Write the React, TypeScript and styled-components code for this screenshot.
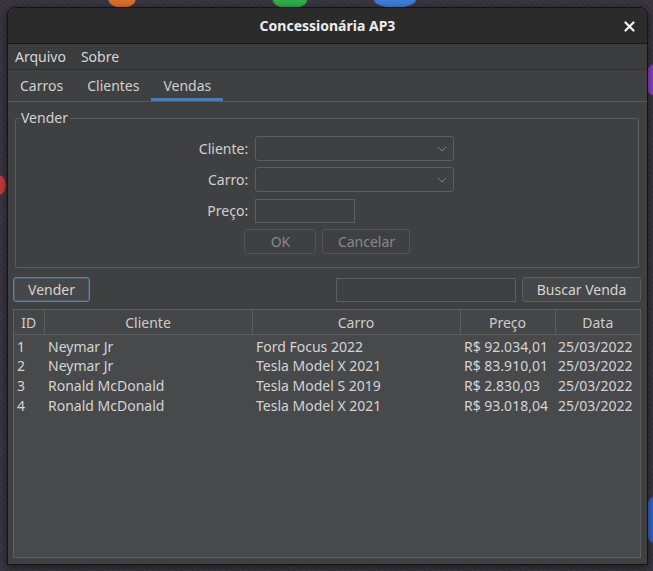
import React from 'react'
import styled, { createGlobalStyle } from 'styled-components'

const GlobalStyle = createGlobalStyle`
  html, body {
    margin: 0;
    padding: 0;
    background: #36323d;
  }
  * {
    box-sizing: border-box;
  }
`

const Desktop = styled.div`
  width: 653px;
  height: 571px;
  overflow: hidden;
  padding: 7px 0 0 7px;
  font-family: "Noto Sans", "DejaVu Sans", sans-serif;
  font-size: 14px;
  color: #d2d2d2;
  background:
    radial-gradient(ellipse 14px 8px at 122px 0px, #d9702c 0 90%, transparent 100%),
    radial-gradient(ellipse 18px 9px at 290px 0px, #2fae4c 0 90%, transparent 100%),
    radial-gradient(ellipse 22px 8px at 395px 0px, #3d7fd6 0 90%, transparent 100%),
    radial-gradient(ellipse 8px 16px at 653px 80px, #8a3fc4 0 90%, transparent 100%),
    radial-gradient(ellipse 8px 24px at 653px 520px, #2f66c9 0 90%, transparent 100%),
    radial-gradient(ellipse 6px 10px at 0px 185px, #c23a3a 0 90%, transparent 100%),
    repeating-linear-gradient(45deg, #37333e 0 2px, #3c3844 2px 4px);
`

const Window = styled.div`
  width: 641px;
  height: 558px;
  display: flex;
  flex-direction: column;
  background: #3f4042;
  border: 1px solid #141414;
  border-radius: 8px 8px 0 0;
  box-shadow: 0 2px 8px rgba(0, 0, 0, 0.55);
  overflow: hidden;
`

const TitleBar = styled.div`
  position: relative;
  height: 36px;
  flex-shrink: 0;
  display: flex;
  align-items: center;
  justify-content: center;
  background: #2b2b2b;
  border-bottom: 1px solid #181818;
  font-weight: 700;
  color: #ececec;
`

const CloseButton = styled.button`
  position: absolute;
  right: 11px;
  top: 11px;
  width: 14px;
  height: 14px;
  padding: 0;
  border: 0;
  background: none;
  display: flex;
  align-items: center;
  justify-content: center;
`

const MenuBar = styled.div`
  height: 26px;
  flex-shrink: 0;
  display: flex;
  align-items: center;
  gap: 15px;
  padding: 0 7px;
  background: #3b3c3d;
  border-bottom: 1px solid #303132;
`

const MenuItem = styled.span`
  color: #d6d6d6;
`

const TabBar = styled.div`
  height: 32px;
  flex-shrink: 0;
  display: flex;
  border-bottom: 1px solid #58595b;
`

const Tab = styled.div<{ $active?: boolean }>`
  display: flex;
  align-items: center;
  padding: 3px 12px 0;
  border-bottom: 3px solid ${p => (p.$active ? '#4a7db3' : 'transparent')};
  color: #d0d0d0;
`

const Content = styled.div`
  flex: 1;
  display: flex;
  flex-direction: column;
  padding: 6px 6px 6px 5px;
  min-height: 0;
`

const GroupBox = styled.fieldset`
  margin: 0 2px;
  padding: 8px 0 13px;
  border: 1px solid #5b5c5e;
  border-radius: 2px;
  min-width: 0;
`

const GroupTitle = styled.legend`
  margin-left: 3px;
  padding: 0 2px;
  line-height: 20px;
  color: #d2d2d2;
`

const FormGrid = styled.div`
  display: grid;
  grid-template-columns: auto 199px;
  grid-auto-rows: 25px;
  column-gap: 7px;
  row-gap: 6px;
  justify-content: center;
  align-items: center;
  padding-right: 1px;
`

const Label = styled.label`
  text-align: right;
  color: #d0d0d0;
`

const Combo = styled.div`
  height: 25px;
  width: 199px;
  display: flex;
  align-items: center;
  justify-content: flex-end;
  padding-right: 6px;
  border: 1px solid #5d5e60;
  border-radius: 3px;
  background: #3f4042;
`

const TextInput = styled.div<{ $width: number }>`
  height: 24px;
  width: ${p => p.$width}px;
  border: 1px solid #5d5e60;
  background: #3f4042;
`

const ButtonRow = styled.div`
  grid-column: 1 / -1;
  display: flex;
  justify-content: center;
  gap: 6px;
  padding-left: 2px;
`

const Button = styled.button<{ $width: number; $disabled?: boolean; $focused?: boolean }>`
  width: ${p => p.$width}px;
  height: 25px;
  padding: 0;
  font: inherit;
  color: ${p => (p.$disabled ? '#87888a' : '#d4d4d4')};
  background: ${p => (p.$disabled ? '#3f4042' : '#464749')};
  border: 1px solid ${p => (p.$focused ? '#5585b8' : p.$disabled ? '#535456' : '#5d5e60')};
  box-shadow: ${p => (p.$focused ? 'inset 0 0 0 1px rgba(85, 133, 184, 0.35)' : 'none')};
  border-radius: 3px;
`

const Toolbar = styled.div`
  margin-top: 9px;
  height: 25px;
  flex-shrink: 0;
  display: flex;
  align-items: center;
  gap: 6px;
`

const Spacer = styled.div`
  flex: 1;
`

const TableFrame = styled.div`
  margin-top: 7px;
  flex: 1;
  border: 1px solid #5e5f61;
  background: #48494b;
  overflow: hidden;
`

const Table = styled.table`
  width: 100%;
  border-collapse: collapse;
  table-layout: fixed;
`

const HeadCell = styled.th`
  height: 24px;
  padding: 1px 0 0;
  font-weight: 400;
  text-align: center;
  color: #cdcdcd;
  background: #454648;
  border-right: 1px solid #5b5c5e;
  border-bottom: 1px solid #5b5c5e;
  &:last-child {
    border-right: 0;
  }
`

const Cell = styled.td<{ $pad?: number }>`
  height: 20px;
  padding: 0 0 0 ${p => p.$pad ?? 4}px;
  white-space: nowrap;
  overflow: hidden;
  color: #d4d4d4;
`

const FirstRow = styled.tr`
  td {
    padding-top: 2px;
  }
`

const Chevron = () => (
  <svg width="10" height="6" viewBox="0 0 10 6">
    <polyline points="1,1 5,5 9,1" fill="none" stroke="#7c7d80" strokeWidth="1" />
  </svg>
)

const CloseIcon = () => (
  <svg width="11" height="11" viewBox="0 0 11 11">
    <path d="M1.5 1.5 L9.5 9.5 M9.5 1.5 L1.5 9.5" stroke="#f2f2f2" strokeWidth="2.2" strokeLinecap="round" />
  </svg>
)

const sales = [
  { id: 1, client: 'Neymar Jr', car: 'Ford Focus 2022', price: 'R$ 92.034,01', date: '25/03/2022' },
  { id: 2, client: 'Neymar Jr', car: 'Tesla Model X 2021', price: 'R$ 83.910,01', date: '25/03/2022' },
  { id: 3, client: 'Ronald McDonald', car: 'Tesla Model S 2019', price: 'R$ 2.830,03', date: '25/03/2022' },
  { id: 4, client: 'Ronald McDonald', car: 'Tesla Model X 2021', price: 'R$ 93.018,04', date: '25/03/2022' },
]

export default function App() {
  return (
    <Desktop>
      <GlobalStyle />
      <Window>
        <TitleBar>
          Concessionária AP3
          <CloseButton aria-label="Fechar">
            <CloseIcon />
          </CloseButton>
        </TitleBar>
        <MenuBar>
          <MenuItem>Arquivo</MenuItem>
          <MenuItem>Sobre</MenuItem>
        </MenuBar>
        <TabBar>
          <Tab>Carros</Tab>
          <Tab>Clientes</Tab>
          <Tab $active>Vendas</Tab>
        </TabBar>
        <Content>
          <GroupBox>
            <GroupTitle>Vender</GroupTitle>
            <FormGrid>
              <Label>Cliente:</Label>
              <Combo>
                <Chevron />
              </Combo>
              <Label>Carro:</Label>
              <Combo>
                <Chevron />
              </Combo>
              <Label>Preço:</Label>
              <TextInput $width={100} />
              <ButtonRow>
                <Button $width={72} $disabled>OK</Button>
                <Button $width={88} $disabled>Cancelar</Button>
              </ButtonRow>
            </FormGrid>
          </GroupBox>
          <Toolbar>
            <Button $width={77} $focused>Vender</Button>
            <Spacer />
            <TextInput $width={180} />
            <Button $width={119}>Buscar Venda</Button>
          </Toolbar>
          <TableFrame>
            <Table>
              <colgroup>
                <col style={{ width: 30 }} />
                <col style={{ width: 208 }} />
                <col style={{ width: 208 }} />
                <col style={{ width: 95 }} />
                <col />
              </colgroup>
              <thead>
                <tr>
                  <HeadCell>ID</HeadCell>
                  <HeadCell>Cliente</HeadCell>
                  <HeadCell>Carro</HeadCell>
                  <HeadCell>Preço</HeadCell>
                  <HeadCell>Data</HeadCell>
                </tr>
              </thead>
              <tbody>
                {sales.map((s, i) => {
                  const cells = (
                    <>
                      <Cell $pad={3}>{s.id}</Cell>
                      <Cell>{s.client}</Cell>
                      <Cell>{s.car}</Cell>
                      <Cell>{s.price}</Cell>
                      <Cell $pad={3}>{s.date}</Cell>
                    </>
                  )
                  return i === 0 ? <FirstRow key={s.id}>{cells}</FirstRow> : <tr key={s.id}>{cells}</tr>
                })}
              </tbody>
            </Table>
          </TableFrame>
        </Content>
      </Window>
    </Desktop>
  )
}
